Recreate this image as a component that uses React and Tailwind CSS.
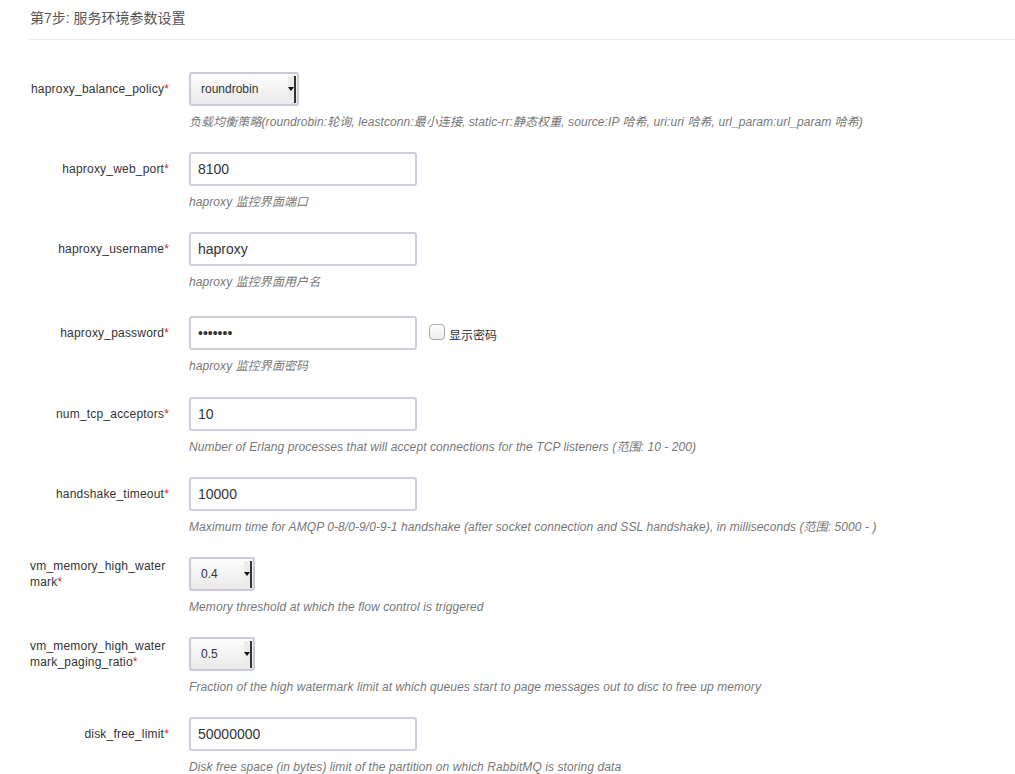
import React from 'react';

const rows = [
  { label: 'haproxy_balance_policy', kind: 'select', value: 'roundrobin', width: 'w-[110px]', help: '负载均衡策略(roundrobin:轮询, leastconn:最小连接, static-rr:静态权重, source:IP 哈希, uri:uri 哈希, url_param:url_param 哈希)' },
  { label: 'haproxy_web_port', kind: 'text', value: '8100', help: 'haproxy 监控界面端口' },
  { label: 'haproxy_username', kind: 'text', value: 'haproxy', help: 'haproxy 监控界面用户名' },
  { label: 'haproxy_password', kind: 'password', value: 'haproxy', help: 'haproxy 监控界面密码' },
  { label: 'num_tcp_acceptors', kind: 'text', value: '10', help: 'Number of Erlang processes that will accept connections for the TCP listeners (范围: 10 - 200)' },
  { label: 'handshake_timeout', kind: 'text', value: '10000', help: 'Maximum time for AMQP 0-8/0-9/0-9-1 handshake (after socket connection and SSL handshake), in milliseconds (范围: 5000 - )' },
  { label: 'vm_memory_high_watermark', kind: 'select', value: '0.4', width: 'w-[66px]', wrap: true, help: 'Memory threshold at which the flow control is triggered' },
  { label: 'vm_memory_high_watermark_paging_ratio', kind: 'select', value: '0.5', width: 'w-[66px]', wrap: true, help: 'Fraction of the high watermark limit at which queues start to page messages out to disc to free up memory' },
  { label: 'disk_free_limit', kind: 'text', value: '50000000', help: 'Disk free space (in bytes) limit of the partition on which RabbitMQ is storing data' },
];

function FakeSelect({ value, width }) {
  return (
    <div className={`${width} h-[34px] flex items-center justify-between border-2 border-[#cbc9d8] rounded-[3px] bg-gradient-to-b from-[#fdfdfd] to-[#e9e9e9] pl-[10px] pr-[1px]`}>
      <span className="text-[12px] text-[#333]">{value}</span>
      <span className="h-[27px] w-[8px] flex items-center justify-center bg-[#ececec] border-r-[2px] border-[#333]">
        <span className="w-0 h-0 border-l-[3px] border-r-[3px] border-t-[4px] border-l-transparent border-r-transparent border-t-[#111]" />
      </span>
    </div>
  );
}

function Field({ row }) {
  if (row.kind === 'select') return <FakeSelect value={row.value} width={row.width} />;
  const input = (
    <input
      type={row.kind === 'password' ? 'password' : 'text'}
      defaultValue={row.value}
      readOnly
      className="w-[228px] h-[34px] border-2 border-[#cfcddc] rounded-[3px] pl-[7px] text-[14px] text-[#333] bg-white outline-none font-['Liberation_Sans',sans-serif]"
    />
  );
  if (row.kind !== 'password') return input;
  return (
    <div className="flex items-center">
      {input}
      <span className="ml-[12px] mt-[-3px] w-[16px] h-[16px] border border-[#aaa] rounded-[4px] bg-gradient-to-b from-white to-[#ececec]" />
      <span className="ml-[4px] mt-[6px] text-[12px] text-[#333]">显示密码</span>
    </div>
  );
}

export default function App() {
  return (
    <div className="bg-white min-h-[774px] pl-[29px] font-['Liberation_Sans','Noto_Sans_CJK_SC',sans-serif]">
      <div className="pt-[8px] pb-[11px] border-b border-[#e8e8e8] leading-[20px] text-[14px] text-[#555]">
        <span className="pl-[1px]">第7步: 服务环境参数设置</span>
      </div>

      <div className="pt-[32px]">
        {rows.map((row, i) => (
          <div key={row.label} className={`flex ${i === 3 ? 'pt-[4px] pb-[22px]' : 'pb-[21px]'}`}>
            <div className={`w-[140px] shrink-0 h-[34px] flex items-center ${row.wrap ? 'justify-start' : 'justify-end'}`}>
              <label className={`text-[12px] leading-[16px] tracking-[0.2px] text-[#333] ${row.wrap ? 'w-full break-all text-left pl-[1px]' : 'text-right'}`}>
                {row.label}<span className="text-[#c9302c]">*</span>
              </label>
            </div>
            <div className="ml-[20px]">
              <Field row={row} />
              <p className="mt-[8px] leading-[17px] text-[12px] italic tracking-[0.08px] text-[#777] whitespace-nowrap">{row.help}</p>
            </div>
          </div>
        ))}
      </div>
    </div>
  );
}
